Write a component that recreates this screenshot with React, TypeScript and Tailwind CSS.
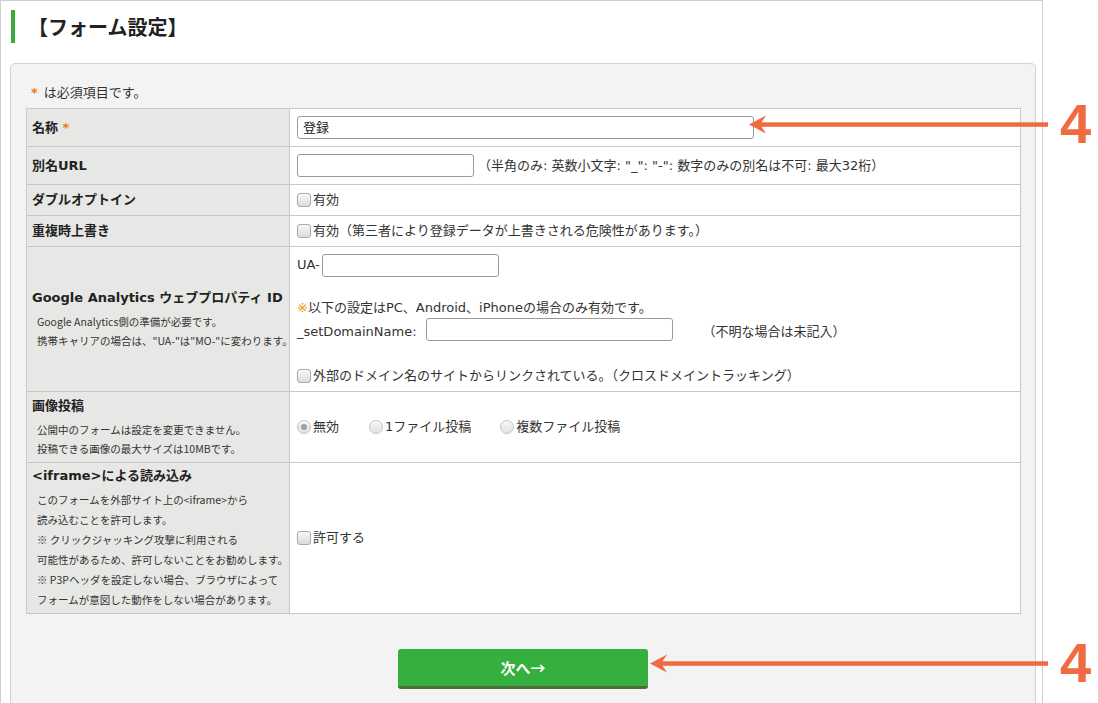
import React from "react";

const Check = () => (
  <span className="inline-block w-[14px] h-[14px] shrink-0 rounded-[3px] border border-[#a9a9a9] bg-linear-to-b from-[#f7f7f7] to-[#dcdcdc] mr-[2px]" />
);

const Radio = ({ on }: { on?: boolean }) => (
  <span className="relative inline-flex items-center justify-center w-[14px] h-[14px] shrink-0 rounded-full border border-[#c4c4c4] bg-linear-to-b from-[#f7f7f7] to-[#e2e2e2] mr-[2px]">
    {on && <span className="w-[6px] h-[6px] rounded-full bg-[#a0a0a0]" />}
  </span>
);

const Input = ({ w, value }: { w: string; value?: string }) => (
  <span className={`inline-flex items-center h-[23px] ${w} shrink-0 border border-[#9a9a9a] rounded-[3px] bg-white px-[5px] text-[13px] text-[#222]`}>
    {value}
  </span>
);

const Star = () => <span className="text-[#ee7a1a] font-bold">*</span>;

export default function App() {
  const font = "font-['DejaVu_Sans','Noto_Sans_CJK_JP',sans-serif]";
  const td = "border border-[#c8c8c8]";
  const lab = `${td} bg-[#e7e8e5] pl-[5px] align-middle text-[13px] font-bold text-[#222] whitespace-nowrap`;
  const val = `${td} bg-white pl-[7px] align-middle text-[13px] text-[#333] whitespace-nowrap`;
  const note = "pl-[5px] text-[10.5px] font-normal text-[#333] whitespace-nowrap font-['Noto_Sans_CJK_JP',sans-serif]";

  return (
    <div className={`relative w-[1098px] h-[703px] overflow-hidden bg-white ${font}`}>
      <div className="w-[1043px] h-[703px] border-t border-l border-r border-[#cfcfcf]">
        <div className="mt-[9px] ml-[10px] h-[33px] border-l-4 border-[#3aab3a] flex items-center pl-[13px]">
          <span className="text-[20px] font-bold text-[#222] font-['Noto_Sans_CJK_JP',sans-serif] leading-none">【フォーム設定】</span>
        </div>

        <div className="mt-[20px] ml-[9px] w-[1026px] h-[700px] bg-[#f3f3f3] border border-[#d2d2d2] rounded-t-[5px] pl-[15px] pt-[20px]">
          <div className="h-[18px] flex items-center text-[13px] text-[#333] pl-[5px]">
            <Star />
            <span className="ml-[6px]">は必須項目です。</span>
          </div>
          <table className="mt-[6px] w-[995px] border-collapse table-fixed">
            <colgroup>
              <col className="w-[263px]" />
              <col />
            </colgroup>
            <tbody>
              <tr className="h-[38px]">
                <td className={lab}>
                  名称 <Star />
                </td>
                <td className={val}>
                  <Input w="w-[457px]" value="登録" />
                </td>
              </tr>
              <tr className="h-[38px]">
                <td className={lab}>別名URL</td>
                <td className={val}>
                  <div className="flex items-center">
                    <Input w="w-[177px]" />
                    <span className="ml-[4px]">（半角のみ: 英数小文字: "_": "-": 数字のみの別名は不可: 最大32桁）</span>
                  </div>
                </td>
              </tr>
              <tr className="h-[31px]">
                <td className={lab}>ダブルオプトイン</td>
                <td className={val}>
                  <div className="flex items-center">
                    <Check />
                    <span>有効</span>
                  </div>
                </td>
              </tr>
              <tr className="h-[31px]">
                <td className={lab}>重複時上書き</td>
                <td className={val}>
                  <div className="flex items-center">
                    <Check />
                    <span>有効（第三者により登録データが上書きされる危険性があります。）</span>
                  </div>
                </td>
              </tr>
              <tr className="h-[145px]">
                <td className={lab}>
                  <div className="leading-[20px]">Google Analytics ウェブプロパティ ID</div>
                  <div className={`${note} mt-[4px] leading-[19px]`}>Google Analytics側の準備が必要です。</div>
                  <div className={`${note} leading-[19px]`}>携帯キャリアの場合は、"UA-"は"MO-"に変わります。</div>
                </td>
                <td className={val}>
                  <div className="flex flex-col">
                    <div className="flex items-center h-[23px]">
                      <span className="mr-[2px]">UA-</span>
                      <Input w="w-[177px]" />
                    </div>
                    <div className="mt-[22px] h-[18px] flex items-center">
                      <span className="text-[#e89a00]">※</span>以下の設定はPC、Android、iPhoneの場合のみ有効です。
                    </div>
                    <div className="mt-[4px] flex items-center h-[23px]">
                      <span>_setDomainName:</span>
                      <span className="ml-[9px]"><Input w="w-[247px]" /></span>
                      <span className="ml-[30px]">（不明な場合は未記入）</span>
                    </div>
                    <div className="mt-[23px] h-[18px] flex items-center">
                      <Check />
                      <span>外部のドメイン名のサイトからリンクされている。（クロスドメイントラッキング）</span>
                    </div>
                  </div>
                </td>
              </tr>
              <tr className="h-[71px]">
                <td className={lab}>
                  <div className="leading-[20px]">画像投稿</div>
                  <div className={`${note} mt-[4px] leading-[19px]`}>公開中のフォームは設定を変更できません。</div>
                  <div className={`${note} leading-[19px]`}>投稿できる画像の最大サイズは10MBです。</div>
                </td>
                <td className={val}>
                  <div className="flex items-center">
                    <Radio on />
                    <span className="mr-[30px]">無効</span>
                    <Radio />
                    <span className="mr-[29px]">1ファイル投稿</span>
                    <Radio />
                    <span>複数ファイル投稿</span>
                  </div>
                </td>
              </tr>
              <tr className="h-[151px]">
                <td className={lab}>
                  <div className="leading-[20px]">&lt;iframe&gt;による読み込み</div>
                  <div className={`${note} mt-[4px] leading-[20px]`}>このフォームを外部サイト上の&lt;iframe&gt;から</div>
                  <div className={`${note} leading-[20px]`}>読み込むことを許可します。</div>
                  <div className={`${note} leading-[20px]`}>※ クリックジャッキング攻撃に利用される</div>
                  <div className={`${note} leading-[20px]`}>可能性があるため、許可しないことをお勧めします。</div>
                  <div className={`${note} leading-[20px]`}>※ P3Pヘッダを設定しない場合、ブラウザによって</div>
                  <div className={`${note} leading-[20px]`}>フォームが意図した動作をしない場合があります。</div>
                </td>
                <td className={val}>
                  <div className="flex items-center">
                    <Check />
                    <span>許可する</span>
                  </div>
                </td>
              </tr>
            </tbody>
          </table>

          <div className="mt-[35px] flex justify-center pr-[15px]">
            <button className="w-[250px] h-[40px] bg-[#35b03f] border-b-[3px] border-[#4d6d3b] rounded-[3px] text-white text-[15px] font-bold font-['Noto_Sans_CJK_JP',sans-serif] flex items-center justify-center pt-[1px]">
              次へ→
            </button>
          </div>
        </div>
      </div>

      <svg className="absolute left-0 top-0 pointer-events-none" width="1098" height="703">
        <rect x="760" y="122.3" width="288" height="4.5" fill="#f06a42" />
        <polygon points="749,124.5 766,115.5 760,124.5 766,133.5" fill="#f06a42" />
        <rect x="661" y="661.3" width="387" height="4.5" fill="#f06a42" />
        <polygon points="650,663.5 667,654.5 661,663.5 667,672.5" fill="#f06a42" />
      </svg>
      <div className="absolute left-[1060px] top-[94px] text-[56px] leading-[60px] font-bold text-[#f06a42] font-['Liberation_Sans',sans-serif]">4</div>
      <div className="absolute left-[1060px] top-[633px] text-[56px] leading-[60px] font-bold text-[#f06a42] font-['Liberation_Sans',sans-serif]">4</div>
    </div>
  );
}
